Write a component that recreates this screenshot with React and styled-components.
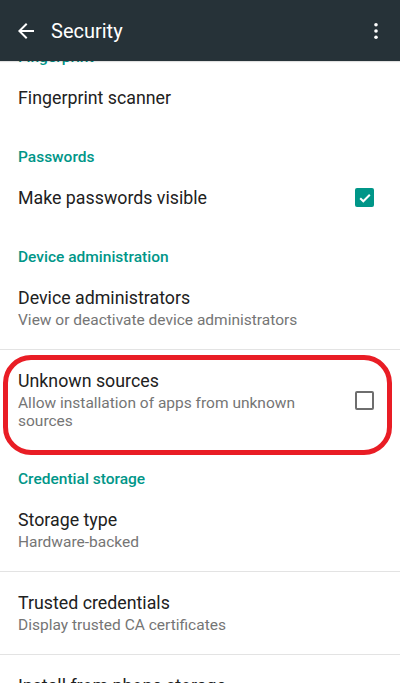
import React from "react";
import styled, { createGlobalStyle } from "styled-components";

const GlobalStyle = createGlobalStyle`
  html, body {
    margin: 0;
    padding: 0;
    background: #ffffff;
  }
  body {
    font-family: Roboto, "Noto Sans", "Liberation Sans", sans-serif;
  }
`;

const sections = [
  {
    title: "Fingerprint",
    items: [{ title: "Fingerprint scanner" }],
  },
  {
    title: "Passwords",
    items: [{ title: "Make passwords visible", checkbox: "on" }],
  },
  {
    title: "Device administration",
    items: [
      {
        title: "Device administrators",
        summary: "View or deactivate device administrators",
      },
      {
        title: "Unknown sources",
        summary: "Allow installation of apps from unknown sources",
        checkbox: "off",
        marked: true,
      },
    ],
  },
  {
    title: "Credential storage",
    items: [
      { title: "Storage type", summary: "Hardware-backed" },
      { title: "Trusted credentials", summary: "Display trusted CA certificates" },
      { title: "Install from phone storage", summary: "Install certificates from storage" },
    ],
  },
];

function BackIcon() {
  return (
    <svg width="24" height="24" viewBox="0 0 24 24">
      <path
        d="M20 11H7.83l5.59-5.59L12 4l-8 8 8 8 1.41-1.41L7.83 13H20v-2z"
        fill="#ffffff"
      />
    </svg>
  );
}

function MoreIcon() {
  return (
    <svg width="24" height="24" viewBox="0 0 24 24">
      <circle cx="12" cy="5" r="2" fill="#ffffff" />
      <circle cx="12" cy="12" r="2" fill="#ffffff" />
      <circle cx="12" cy="19" r="2" fill="#ffffff" />
    </svg>
  );
}

function Check({ on }) {
  return (
    <CheckBox $on={on}>
      {on && (
        <svg width="14" height="14" viewBox="0 0 14 14">
          <path
            d="M2.2 7.2l3.1 3.1 6.5-6.6"
            fill="none"
            stroke="#ffffff"
            strokeWidth="2"
          />
        </svg>
      )}
    </CheckBox>
  );
}

export default function App() {
  return (
    <>
      <GlobalStyle />
      <Screen>
        <Toolbar>
          <IconButton>
            <BackIcon />
          </IconButton>
          <Title>Security</Title>
          <MenuButton>
            <MoreIcon />
          </MenuButton>
        </Toolbar>
        <Scroll>
          <List>
            {sections.map((section) => (
              <Section key={section.title}>
                <Header>{section.title}</Header>
                {section.items.map((item, i) => (
                  <Item
                    key={item.title}
                    $single={!item.summary}
                    $divider={!!item.summary && i < section.items.length - 1}
                  >
                    <Texts>
                      <ItemTitle>{item.title}</ItemTitle>
                      {item.summary && <Summary>{item.summary}</Summary>}
                    </Texts>
                    {item.checkbox && <Check on={item.checkbox === "on"} />}
                    {item.marked && <Marker />}
                  </Item>
                ))}
              </Section>
            ))}
          </List>
        </Scroll>
      </Screen>
    </>
  );
}

const Screen = styled.div`
  width: 400px;
  height: 683px;
  display: flex;
  flex-direction: column;
  overflow: hidden;
  background: #ffffff;
`;

const Toolbar = styled.div`
  position: relative;
  z-index: 2;
  flex: 0 0 61px;
  display: flex;
  align-items: center;
  background: #263238;
  box-shadow: 0 1px 1px rgba(0, 0, 0, 0.12);
`;

const IconButton = styled.div`
  width: 24px;
  height: 24px;
  margin-left: 14px;
`;

const Title = styled.div`
  margin-left: 13px;
  color: #ffffff;
  font-size: 20px;
  line-height: 24px;
  flex: 1;
`;

const MenuButton = styled.div`
  width: 24px;
  height: 24px;
  margin-right: 12px;
  transform: scale(0.9);
`;

const Scroll = styled.div`
  flex: 1;
  overflow: hidden;
`;

const List = styled.div`
  margin-top: -33px;
`;

const Section = styled.div``;

const Header = styled.div`
  padding: 20px 18px 1px;
  line-height: 18px;
  font-size: 15.5px;
  font-weight: 500;
  color: #009688;
`;

const Item = styled.div`
  position: relative;
  display: flex;
  align-items: center;
  min-height: ${(p) => (p.$single ? "61px" : "auto")};
  padding: ${(p) => (p.$single ? "0 26px 0 18px" : "20px 26px 20px 18px")};
  box-sizing: border-box;
  border-bottom: ${(p) => (p.$divider ? "1px solid #e3e3e3" : "none")};
`;

const Texts = styled.div`
  flex: 1;
  min-width: 0;
  padding-right: 30px;
`;

const ItemTitle = styled.div`
  font-size: 17.8px;
  line-height: 22px;
  color: #212121;
`;

const Summary = styled.div`
  margin-top: 2px;
  font-size: 15.5px;
  line-height: 18px;
  color: #757575;
`;

const CheckBox = styled.div`
  flex: 0 0 auto;
  width: 19px;
  height: 19px;
  box-sizing: border-box;
  border-radius: 2px;
  display: flex;
  align-items: center;
  justify-content: center;
  background: ${(p) => (p.$on ? "#009688" : "transparent")};
  border: ${(p) => (p.$on ? "none" : "2px solid #6e6e6e")};
`;

const Marker = styled.div`
  position: absolute;
  left: 3px;
  right: 8px;
  top: 5px;
  bottom: -5px;
  border: 5px solid #e91d25;
  border-radius: 28px;
  pointer-events: none;
`;
